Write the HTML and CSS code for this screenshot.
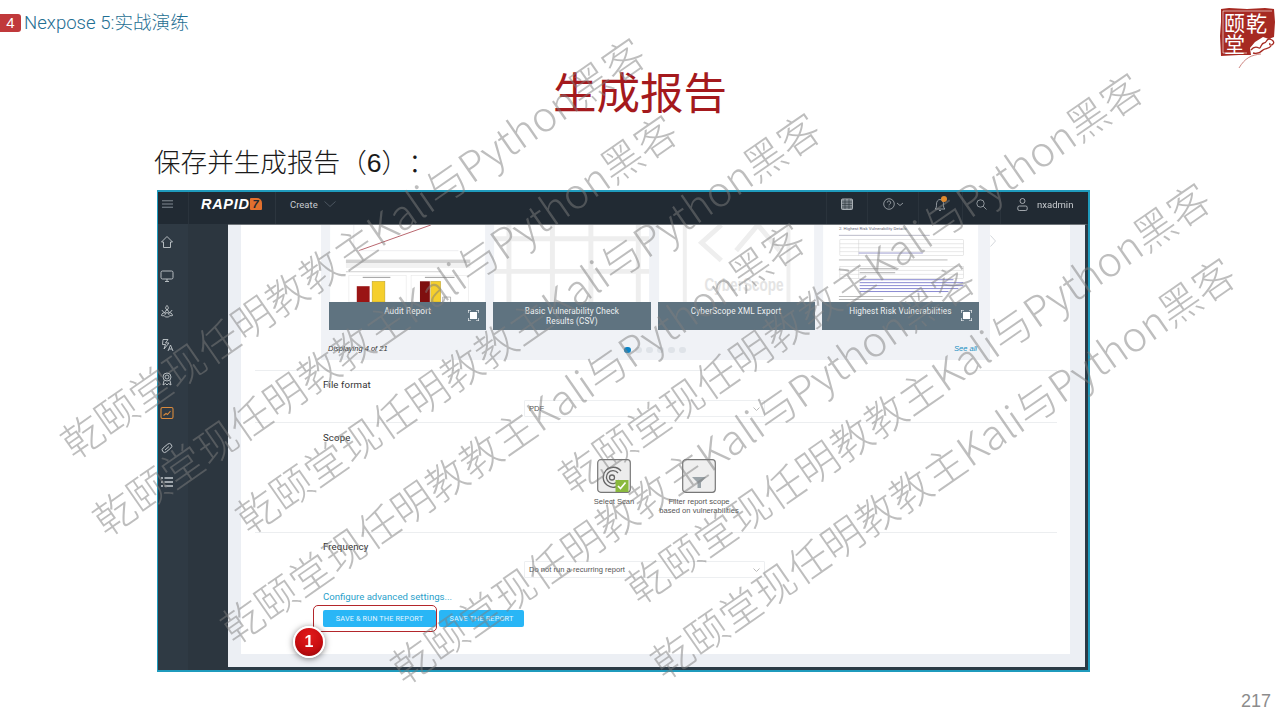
FILE: index.html
```html
<!DOCTYPE html>
<html lang="zh-CN">
<head>
<meta charset="utf-8">
<title>生成报告</title>
<link rel="stylesheet" href="styles.css">
</head>
<body>
<div class="slide">
  <header class="top">
    <span class="badge">4</span>
    <span class="crumb">Nexpose 5:实战演练</span>
    <svg class="seal" viewBox="0 0 57 57" aria-label="乾颐堂">
      <path d="M2 3 L10 2 L28 3 L46 2 L55 3 L56 16 L55 31 L50 33 L44 31 L36 36 L31 42 L32 49 L20 49 L2 50 L1 30 L2 16Z" fill="#a62a22"/>
      <path d="M4 5 H53 M4 5 V47 M4 47 H28" fill="none" stroke="#fff" stroke-width=".6"/>
      <text x="5" y="25" class="seal-t">颐</text>
      <text x="27" y="25" class="seal-t">乾</text>
      <text x="5" y="46" class="seal-t">堂</text>
      <path d="M32 44c3-4 6-3 8-2s2-5 5-5 2-4 5-4 6 3 4 5-4 1-3-1M34 47c4 1 8-1 10-3s6-1 8-4" fill="none" stroke="#a62a22" stroke-width="1.300"/>
      <path d="M42 48C32 49 26 52 20 62" fill="none" stroke="#b7514a" stroke-width=".7"/>
    </svg>
  </header>
  <h1 class="title">生成报告</h1>
  <p class="sub">保存并生成报告（<span class="sub-num">6</span>）：</p>

  <section class="app">
    <nav class="nav">
      <div class="nav-burger">
        <svg width="12" height="8" viewBox="0 0 12 8"><path d="M0 .5H12M0 4H12M0 7.5H12" stroke="#8b949c" stroke-width="1"/></svg>
      </div>
      <div class="nav-brand"><span class="brand">RAPID</span><span class="brand-7">7</span></div>
      <div class="nav-create">
        <span>Create</span>
        <svg width="12" height="6" viewBox="0 0 12 6"><path d="M.5.5L6 5.5 11.500.5" fill="none" stroke="#4b5660"/></svg>
      </div>
      <div class="nav-tool nav-cal">
        <svg width="12" height="12" viewBox="0 0 12 12"><rect x=".5" y="1" width="11" height="10.500" rx="1" fill="#7d858c" stroke="#aab0b5"/><path d="M1 4H11M1 6.500H11M1 9H11M4 1V11M8 1V11" stroke="#2a333b" stroke-width=".6"/></svg>
      </div>
      <div class="nav-tool nav-help">
        <svg width="21" height="12" viewBox="0 0 21 12"><circle cx="6" cy="6" r="5.300" fill="none" stroke="#aab0b5" stroke-width=".8"/><path d="M4.300 4.600a1.700 1.700 0 1 1 2.500 1.500c-.6.3-.8.6-.8 1.200M6 8.600v.8" fill="none" stroke="#aab0b5" stroke-width=".8"/><path d="M14 5l3 2.500L20 5" fill="none" stroke="#aab0b5" stroke-width=".8"/></svg>
      </div>
      <div class="nav-tool nav-bell">
        <svg width="14" height="16" viewBox="0 0 14 16"><path d="M1 13c1.500-1 1.500-2.500 1.500-5S4 3.500 6 3.500 9.500 5.500 9.500 8s0 4 1.500 5zM5 14.500h2" fill="none" stroke="#aab0b5" stroke-width=".8"/><circle cx="10" cy="3" r="3" fill="#e08a2e"/></svg>
      </div>
      <div class="nav-tool nav-search">
        <svg width="11" height="11" viewBox="0 0 11 11"><circle cx="4.500" cy="4.500" r="3.700" fill="none" stroke="#aab0b5" stroke-width=".8"/><path d="M7.300 7.300L10.500 10.500" stroke="#aab0b5" stroke-width=".8"/></svg>
      </div>
      <div class="nav-user">
        <svg width="11" height="13" viewBox="0 0 11 13"><circle cx="5.500" cy="3" r="2.500" fill="none" stroke="#c3c7cb" stroke-width=".8"/><rect x=".8" y="8" width="9.400" height="4.500" rx="1.500" fill="none" stroke="#c3c7cb" stroke-width=".8"/></svg>
        <span>nxadmin</span>
      </div>
    </nav>
    <div class="app-body">
      <aside class="side">
        <svg class="ico" viewBox="0 0 14 14"><path d="M1.500 7L7 1.500 12.500 7H10.500V12.500H3.500V7Z"/></svg>
        <svg class="ico" viewBox="0 0 14 14"><rect x="1" y="2" width="12" height="8" rx="1.500"/><path d="M5 12.500H9M7 10V12.500"/></svg>
        <svg class="ico" viewBox="0 0 14 14"><circle cx="7" cy="7.500" r="1.500"/><path d="M7 1.500c-1.800 1-1.800 3.500 0 4.500 1.800-1 1.800-3.500 0-4.500zM1.500 11.500c.2-2.300 2.300-3.400 4-2.300-.1 2-2 3.300-4 2.300zM12.500 11.500c-.2-2.300-2.300-3.400-4-2.300.1 2 2 3.300 4 2.300zM2 6c.6 1.500 1.500 2.300 3 2.500M12 6c-.6 1.500-1.500 2.300-3 2.500M4.500 12.500c1.500.7 3.500.7 5 0"/></svg>
        <svg class="ico" viewBox="0 0 14 14"><path d="M3 1.500H8L5.500 5H9L4 11 5.500 6.500H2.500Z"/><path d="M8 13L10.500 7 13 13M9 11H12"/></svg>
        <svg class="ico" viewBox="0 0 14 14"><circle cx="7" cy="5" r="4"/><circle cx="7" cy="5" r="2"/><path d="M4 8.500L3 13 5.500 11.500 7 13 8.500 11.500 11 13 10 8.500"/></svg>
        <svg class="ico ico-on" viewBox="0 0 14 14"><rect x="1" y="1.500" width="12" height="11" rx="1.500"/><path d="M3.500 9.500L6 7.500 7.500 8.500 10.500 5"/></svg>
        <svg class="ico" viewBox="0 0 14 14"><rect x="1.500" y="4.500" width="11" height="5" rx="2.500" transform="rotate(-40 7 7)"/><path d="M5 9L9 5.500"/></svg>
        <svg class="ico" viewBox="0 0 14 14"><path d="M4.500 3H13M4.500 7H13M4.500 11H13" stroke-width="1.300"/><path d="M1 3H3M1 7H3M1 11H3" stroke-width="1.600"/></svg>
      </aside>
      <main class="main">
        <div class="panel">
          <div class="gallery">
            <div class="cards">
              <article class="card">
                <svg class="thumb" viewBox="0 0 157 78">
                  <rect width="157" height="78" fill="#fff"/>
                  <path d="M29 26L102 0" stroke="#a8404a" stroke-width=".8"/>
                  <path d="M24 0V26H130" fill="none" stroke="#dcdfe2" stroke-width=".5"/>
                  <rect x="16" y="35" width="126" height="3.500" fill="#d2d2d2"/>
                  <rect x="16" y="38.500" width="126" height="5" fill="#f2f2f2"/>
                  <rect x="16" y="47" width="96" height=".8" fill="#c4c4c4"/>
                  <rect x="19" y="51" width="58" height="27" fill="#fff" stroke="#e2e2e2" stroke-width=".5"/>
                  <rect x="82" y="51" width="58" height="27" fill="#fff" stroke="#e2e2e2" stroke-width=".5"/>
                  <rect x="33" y="52.500" width="28" height="1.200" fill="#aaa"/>
                  <rect x="96" y="52.500" width="30" height="1.200" fill="#aaa"/>
                  <rect x="27" y="62" width="13" height="16" fill="#9a1414"/>
                  <rect x="42.500" y="57" width="13" height="21" fill="#f5cf2c" stroke="#a59030" stroke-width=".4"/>
                  <rect x="91" y="57" width="10" height="21" fill="#7f0f0f"/>
                  <rect x="102" y="57" width="10" height="21" fill="#f5cf2c" stroke="#a59030" stroke-width=".4"/>
                  <path d="M114 78V73H122V78" fill="none" stroke="#999" stroke-width=".7"/>
                </svg>
                <div class="cap"><span>Audit Report</span><svg class="expand" viewBox="0 0 11 11"><rect x="2" y="2" width="7" height="7" fill="#fff"/><path d="M0 3V0H3M8 0H11V3M11 8V11H8M3 11H0V8" fill="none" stroke="#fff" stroke-width="1.200"/></svg></div>
              </article>
              <article class="card">
                <svg class="thumb" viewBox="0 0 157 78">
                  <rect width="157" height="78" fill="#fff"/>
                  <path d="M15 0V78M59 0V78M98 0V78M146 0V78M0 14H157M0 47H157" stroke="#eeeeee" stroke-width="5"/>
                </svg>
                <div class="cap"><span>Basic Vulnerability Check<br>Results (CSV)</span></div>
              </article>
              <article class="card">
                <svg class="thumb" viewBox="0 0 157 78">
                  <rect width="157" height="78" fill="#fff"/>
                  <path d="M26 0V78M131 0V78" stroke="#efefef" stroke-width="4"/>
                  <path d="M63 0L43 18 63 36M78 26L100 0 122 26" fill="none" stroke="#eeeeee" stroke-width="5"/>
                  <text x="46" y="67" class="cyber" textLength="80" lengthAdjust="spacingAndGlyphs">CyberScope</text>
                </svg>
                <div class="cap"><span>CyberScope XML Export</span></div>
              </article>
              <article class="card">
                <svg class="thumb" viewBox="0 0 157 78">
                  <rect width="157" height="78" fill="#fff"/>
                  <text x="16" y="5" class="doc-h">2. Highest Risk Vulnerability Details</text>
                  <rect x="16" y="10" width="92" height=".8" fill="#aab"/>
                  <g fill="none" stroke="#c4c4c4" stroke-width=".4">
                    <rect x="17" y="15" width="125" height="16"/>
                    <path d="M17 19H142M17 23H142M17 27H142M36 15V31"/>
                    <rect x="17" y="42" width="125" height="12"/>
                    <path d="M17 46H142M17 50H142M36 42V54"/>
                  </g>
                  <rect x="36" y="28" width="65" height=".8" fill="#8484c4"/>
                  <rect x="16" y="35" width="110" height=".8" fill="#aaa"/>
                  <rect x="37" y="44" width="36" height=".8" fill="#999"/>
                  <rect x="37" y="48" width="36" height=".8" fill="#999"/>
                  <g fill="#7b7bcc">
                    <rect x="37" y="55" width="95" height=".9"/>
                    <rect x="37" y="58" width="105" height=".9"/>
                    <rect x="37" y="61" width="105" height=".9"/>
                    <rect x="37" y="64" width="100" height=".9"/>
                    <rect x="37" y="67" width="90" height=".9"/>
                  </g>
                  <rect x="16" y="72" width="105" height=".8" fill="#aaa"/>
                  <rect x="16" y="75" width="45" height=".8" fill="#aaa"/>
                </svg>
                <div class="cap"><span>Highest Risk Vulnerabilities</span><svg class="expand" viewBox="0 0 11 11"><rect x="2" y="2" width="7" height="7" fill="#fff"/><path d="M0 3V0H3M8 0H11V3M11 8V11H8M3 11H0V8" fill="none" stroke="#fff" stroke-width="1.200"/></svg></div>
              </article>
            </div>
            <div class="g-foot">
              <em class="count">Displaying 4 of 21</em>
              <div class="dots"><i class="dot dot-on"></i><i class="dot"></i><i class="dot"></i><i class="dot"></i><i class="dot"></i><i class="dot"></i></div>
              <a class="see">See all</a>
            </div>
            <svg class="next" width="6" height="12" viewBox="0 0 6 12"><path d="M.5.5L5.500 6 .5 11.500" fill="none" stroke="#d5d8dc"/></svg>
          </div>

          <div class="sec sec-file">
            <div class="label">File format</div>
            <div class="select select-a"><span>PDF</span><svg width="7" height="4" viewBox="0 0 7 4"><path d="M.5.5L3.500 3.500 6.500.5" fill="none" stroke="#bbb"/></svg></div>
          </div>
          <div class="sec sec-scope">
            <div class="label label-scope">Scope</div>
            <div class="opts">
              <div class="opt opt-a">
                <svg class="opt-ico" viewBox="0 0 34 34"><rect x=".7" y=".7" width="32.600" height="32.600" rx="3" fill="#ececec" stroke="#777" stroke-width="1.200"/><g fill="none" stroke="#666" stroke-width="1.300"><path d="M24 12a10 10 0 1 0 1 11"/><path d="M21 14a6.500 6.500 0 1 0 .8 7"/><circle cx="15" cy="18.500" r="2.500"/></g><rect x="18.500" y="21" width="13" height="12" fill="#8ab93e"/><path d="M21 27l2.500 2.500 5-6" fill="none" stroke="#fff" stroke-width="1.600"/></svg>
                <span>Select Scan</span>
              </div>
              <div class="opt opt-b">
                <svg class="opt-ico" viewBox="0 0 34 34"><rect x=".7" y=".7" width="32.600" height="32.600" rx="3" fill="#efefef" stroke="#777" stroke-width="1.200"/><path d="M10 18H24L19 23.500V29H15.500V23.500Z" fill="#9aa3a8"/></svg>
                <span>Filter report scope<br>based on vulnerabilities</span>
              </div>
            </div>
          </div>
          <div class="sec sec-freq">
            <div class="label">Frequency</div>
            <div class="select select-b"><span>Do not run a recurring report</span><svg width="7" height="4" viewBox="0 0 7 4"><path d="M.5.5L3.500 3.500 6.500.5" fill="none" stroke="#bbb"/></svg></div>
            <a class="adv">Configure advanced settings...</a>
            <div class="btns">
              <button class="btn btn-run">SAVE &amp; RUN THE REPORT</button>
              <button class="btn btn-save">SAVE THE REPORT</button>
            </div>
          </div>
        </div>
      </main>
    </div>
  </section>

  <div class="pageno">217</div>

  <div class="callout"></div>
  <div class="step">1</div>

  <div class="wm wm1">乾颐堂现任明教教主Kali与Python黑客</div>
  <div class="wm wm2">乾颐堂现任明教教主Kali与Python黑客</div>
  <div class="wm wm3">乾颐堂现任明教教主Kali与Python黑客</div>
  <div class="wm wm4">乾颐堂现任明教教主Kali与Python黑客</div>
  <div class="wm wm5">乾颐堂现任明教教主Kali与Python黑客</div>
  <div class="wm wm6">乾颐堂现任明教教主Kali与Python黑客</div>
  <div class="wm wm7">乾颐堂现任明教教主Kali与Python黑客</div>
  <div class="wm wm8">乾颐堂现任明教教主Kali与Python黑客</div>
</div>
</body>
</html>
```
FILE: styles.css
```css
* { box-sizing: border-box; }
html, body { margin: 0; padding: 0; background: #fff; }
.slide {
  position: relative; width: 1280px; height: 720px; overflow: hidden; background: #fff;
  font-family: Roboto, "Noto Sans CJK SC", sans-serif; text-spacing-trim: space-all;
}
.top { display: flex; align-items: flex-start; height: 63px; padding-top: 6px; padding-right: 4px; }
.badge {
  width: 21px; height: 18px; margin-top: 8px; background: #c0393b; color: #fff;
  border-radius: 0 3px 3px 0; font: 15px/18px "Liberation Sans", sans-serif; text-align: center;
}
.crumb {
  margin: 6px 0 0 3px; color: #1f6f93; font-size: 18.600px; line-height: 22px; font-weight: 300;
  font-family: Roboto, "Noto Sans CJK SC", sans-serif;
}
.seal { width: 57px; height: 57px; margin-left: auto; overflow: visible; }
.seal-t { font: 21px "Noto Sans CJK SC", sans-serif; fill: #fff; }
.title {
  margin: 0; height: 56px; text-align: center; color: #a4191d;
  font: 400 43.500px/56px "Noto Sans CJK SC", sans-serif;
}
.sub {
  margin: 22px 0 0 154px; height: 40px; color: #1a1a1a;
  font: 300 26.600px/40px "Noto Sans CJK SC", sans-serif;
}
.sub-num { font-family: "Liberation Sans", sans-serif; }

.app {
  display: flex; flex-direction: column; width: 933px; height: 482px; margin: 9px 0 0 157px;
  border: 2px solid #1f9bbd; border-left-width: 1px; filter: blur(.35px);
}
.nav { display: flex; align-items: stretch; height: 32px; background: #212a33; color: #c7cbcf; flex: none; }
.nav > div { padding-bottom: 8px; }
.nav-burger { width: 31px; display: flex; align-items: center; border-right: 1px solid #2a333c; padding-left: 4px; padding-right: 15px; }
.nav-brand { width: 87px; padding-left: 12px; display: flex; align-items: center; border-right: 1px solid #2c353e; }
.brand { color: #fff; font: italic 700 14.500px/1 "Liberation Sans", sans-serif; letter-spacing: .7px; }
.brand-7 {
  color: #212a33; background: #e2702e; font: italic 700 11px/12px "Liberation Sans", sans-serif;
  width: 12px; height: 12px; border-radius: 1px 5px 1px 1px; text-align: center;
}
.nav-create { display: flex; align-items: center; gap: 6px; padding-left: 14px; font-size: 9.500px; width: 550px; flex: none; }
.nav-tool { display: flex; align-items: center; justify-content: center; flex: none; border-left: 1px solid #2a333c; }
.nav-cal { width: 41px; }
.nav-help { width: 51px; }
.nav-bell { width: 44px; }
.nav-search { width: 38px; }
.nav-user { display: flex; align-items: center; gap: 9px; padding-left: 16px; border-left: 1px solid #2a333c; font-size: 9.500px; flex: 1; }

.app-body { display: flex; flex: 1; min-height: 0; }
.side {
  width: 70px; flex: none; background: linear-gradient(90deg, #2f3a44 0, #2f3a44 43%, #2c363f 43%, #2c363f 100%);
  display: flex; flex-direction: column; align-items: flex-start; gap: 20.300px; padding: 11px 0 0 2px;
}
.ico { width: 14px; height: 14px; fill: none; stroke: #c4c9cd; stroke-width: .9; flex: none; }
.ico-on { stroke: #d98a3d; stroke-width: 1.100; }
.main {
  flex: 1; min-width: 0; background: #eceff4; padding-left: 13px;
  border-right: 3px solid #2b3a45; border-bottom: 3px solid #2b3a45; border-top: 1px solid #6e7479;
}
.panel { width: 829px; height: 429px; background: #fff; color: #333; }

.gallery { position: relative; margin-left: 80px; width: 669px; height: 135px; background: #f0f2f6; padding: 0 8px; }
.cards { display: grid; grid-template-columns: repeat(4, 1fr); gap: 7px; width: 650px; }
.card { height: 105px; display: flex; flex-direction: column; }
.thumb { width: 100%; height: 77px; display: block; flex: none; }
.cyber { font: 700 19px "Liberation Sans", sans-serif; fill: #e4e4e4; }
.doc-h { font: 4.400px Roboto, sans-serif; fill: #667; }
.cap {
  position: relative; flex: 1; background: #5f7380; color: #eef1f2; font-size: 8.200px; line-height: 10px;
  text-align: center; padding-top: 4px; letter-spacing: .12px;
}
.expand { position: absolute; right: 7px; top: 8px; width: 11px; height: 11px; }
.g-foot { position: relative; display: flex; justify-content: space-between; align-items: center; height: 30px; padding-top: 6px; }
.count { font: italic 7.500px "Liberation Sans", sans-serif; color: #333; margin-left: -1px; }
.dots { display: flex; gap: 4.500px; margin-top: 4px; margin-left: -32px; }
.dot { width: 6.500px; height: 6.500px; border-radius: 50%; background: #dfe3e8; }
.dot-on { background: #0b84c6; }
.see { font: italic 7.500px "Liberation Sans", sans-serif; color: #1a8fc2; margin-right: 5px; }
.next { position: absolute; left: 669px; top: 10px; }

.sec { margin: 0 13px 0 14px; padding-left: 68px; border-top: 1px solid #eceef0; }
.sec-file { margin-top: 10px; height: 52px; }
.sec-scope { height: 110px; }
.sec-freq { height: 122px; }
.label { font-size: 9.700px; line-height: 14px; padding-top: 7px; height: 21px; color: #333; font-weight: 400; letter-spacing: .1px; }
.label-scope { padding-top: 8px; height: 22px; }
.select {
  display: flex; align-items: center; justify-content: space-between; width: 241px; height: 17px; margin-left: 201px;
  border: 1px solid #edeff1; padding: 0 4px; font: 7.600px "Liberation Sans", sans-serif; color: #555; border-radius: 1px;
}
.select-a { margin-top: 8px; }
.select-b { margin-top: 7px; }
.opts { display: flex; gap: 10px; margin: 14px 0 0 261px; }
.opt { display: flex; flex-direction: column; align-items: center; font: 7.600px/9px "Liberation Sans", sans-serif; text-align: center; color: #555; gap: 4px; }
.opt-a { width: 60px; }
.opt-b { width: 90px; }
.opt-ico { width: 34px; height: 34px; display: block; }
.adv { display: block; margin-top: 13px; color: #2a9fcb; font-size: 9.600px; line-height: 12px; }
.btns { display: flex; gap: 3px; margin-top: 7px; }
.btn {
  height: 17px; padding: 0; border: 0; border-radius: 2px; background: #29b6f6; color: #e3f5ff;
  font: 400 7.300px/17px Roboto, sans-serif; letter-spacing: .15px;
}
.btn-run { width: 113px; }
.btn-save { width: 85px; }

.pageno { margin: 17px 9px 0 0; text-align: right; color: #8c8c8c; font: 18px/24px "Liberation Sans", sans-serif; }

.callout { position: absolute; left: 313px; top: 605px; width: 124px; height: 27px; border: 1px solid #b3262b; border-radius: 5px; }
.step {
  position: absolute; left: 293px; top: 626px; width: 32px; height: 32px; border-radius: 50%;
  background: radial-gradient(circle at 50% 30%, #e31b1b 0, #c80d10 55%, #8f0508 100%);
  border: 2px solid #fff; box-shadow: 0 1px 6px rgba(0,0,0,.5);
  color: #fff; font: 700 16px/28px "Liberation Sans", sans-serif; text-align: center;
}

.wm {
  position: absolute; white-space: nowrap; font: 300 41.400px/48px "Noto Sans CJK SC", Roboto, sans-serif;
  color: rgba(125,125,125,.5); transform: rotate(-34.800deg); transform-origin: 0 50%;
}
.wm1 { left: 64px; top: 422px; }
.wm2 { left: 96px; top: 499px; }
.wm3 { left: 239px; top: 497px; }
.wm4 { left: 224px; top: 607px; }
.wm5 { left: 394px; top: 647px; }
.wm6 { left: 562px; top: 457px; }
.wm7 { left: 629px; top: 567px; }
.wm8 { left: 654px; top: 642px; }
```
